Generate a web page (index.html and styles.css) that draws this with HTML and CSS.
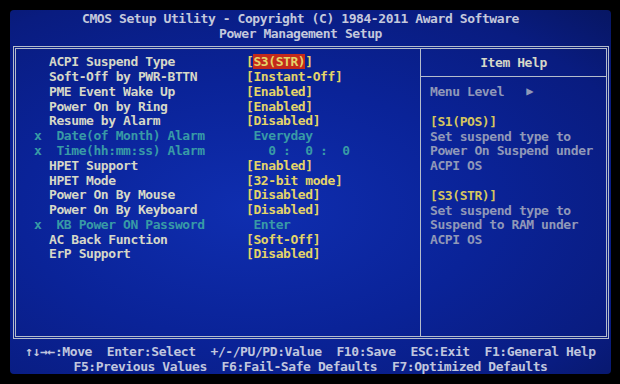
FILE: index.html
```html
<html lang="en">
<head>
  <meta charset="UTF-8">
  <meta name="viewport" content="width=device-width, initial-scale=1.0">
  <title>Power Management Setup</title>
  <link rel="stylesheet" href="styles.css">
</head>
<body>
  <div class="screen">
    <div class="title">
      <div>CMOS Setup Utility - Copyright (C) 1984-2011 Award Software</div>
      <div>Power Management Setup</div>
    </div>

    <div class="frame">
      <div class="items">
        <div class="row"><span class="mark"></span><span class="label">ACPI Suspend Type</span><span class="value">[<span class="selected">S3(STR)</span>]</span></div>
        <div class="row"><span class="mark"></span><span class="label">Soft-Off by PWR-BTTN</span><span class="value">[Instant-Off]</span></div>
        <div class="row"><span class="mark"></span><span class="label">PME Event Wake Up</span><span class="value">[Enabled]</span></div>
        <div class="row"><span class="mark"></span><span class="label">Power On by Ring</span><span class="value">[Enabled]</span></div>
        <div class="row"><span class="mark"></span><span class="label">Resume by Alarm</span><span class="value">[Disabled]</span></div>
        <div class="row off"><span class="mark">x</span><span class="label">&nbsp;Date(of Month) Alarm</span><span class="value">&nbsp;Everyday</span></div>
        <div class="row off"><span class="mark">x</span><span class="label">&nbsp;Time(hh:mm:ss) Alarm</span><span class="value">&nbsp;&nbsp;&nbsp;0 :&nbsp;&nbsp;0 :&nbsp;&nbsp;0</span></div>
        <div class="row"><span class="mark"></span><span class="label">HPET Support</span><span class="value">[Enabled]</span></div>
        <div class="row"><span class="mark"></span><span class="label">HPET Mode</span><span class="value">[32-bit mode]</span></div>
        <div class="row"><span class="mark"></span><span class="label">Power On By Mouse</span><span class="value">[Disabled]</span></div>
        <div class="row"><span class="mark"></span><span class="label">Power On By Keyboard</span><span class="value">[Disabled]</span></div>
        <div class="row off"><span class="mark">x</span><span class="label">&nbsp;KB Power ON Password</span><span class="value">&nbsp;Enter</span></div>
        <div class="row"><span class="mark"></span><span class="label">AC Back Function</span><span class="value">[Soft-Off]</span></div>
        <div class="row"><span class="mark"></span><span class="label">ErP Support</span><span class="value">[Disabled]</span></div>
      </div>

      <div class="help">
        <div class="help-title">Item Help</div>
        <div class="help-body">
          <div>Menu Level&nbsp;&nbsp;&nbsp;<span class="arrow">&#9654;</span></div>
          <div>&nbsp;</div>
          <div class="opt">[S1(POS)]</div>
          <div>Set suspend type to</div>
          <div>Power On Suspend under</div>
          <div>ACPI OS</div>
          <div>&nbsp;</div>
          <div class="opt">[S3(STR)]</div>
          <div>Set suspend type to</div>
          <div>Suspend to RAM under</div>
          <div>ACPI OS</div>
        </div>
      </div>
    </div>

    <div class="footer">
      <div>&#8593;&#8595;&#8594;&#8592;:Move&nbsp;&nbsp;Enter:Select&nbsp;&nbsp;+/-/PU/PD:Value&nbsp;&nbsp;F10:Save&nbsp;&nbsp;ESC:Exit&nbsp;&nbsp;F1:General Help</div>
      <div>F5:Previous Values&nbsp;&nbsp;F6:Fail-Safe Defaults&nbsp;&nbsp;F7:Optimized Defaults</div>
    </div>
  </div>
</body>
</html>
```

FILE: styles.css
```css
body {
  margin: 0;
  background: #000;
  font-family: "DejaVu Sans Mono", "Liberation Mono", monospace;
  font-weight: bold;
  font-size: 13px;
  letter-spacing: -0.42px;
  line-height: 14.8px;
}

.screen {
  margin: 10px 9px 10px 10px;
  height: 364px;
  display: flex;
  flex-direction: column;
  background: radial-gradient(ellipse at 40% 55%, #0f2eb0 0%, #0a2398 45%, #091c80 80%, #071663 100%);
  border-radius: 4px;
}

.title {
  height: 37px;
  padding-right: 20px;
  text-align: center;
  color: #c4c8dc;
  line-height: 15px;
  padding-top: 1px;
  box-sizing: border-box;
}

.frame {
  display: flex;
  margin: 0 2px 0 3px;
  height: 294px;
  border: 3px double #b4bccc;
}

.items {
  width: 386px;
  padding: 6px 0 0 18px;
}

.row {
  display: flex;
  white-space: pre;
  color: #d6d8c8;
}

.mark {
  width: 15px;
}

.label {
  width: 197px;
}

.value {
  color: #e4d468;
}

.selected {
  background: #c42a1c;
}

.row.off,
.row.off .value {
  color: #389aa6;
}

.help {
  flex: 1;
  border-left: 1px solid #b4bccc;
}

.help-title {
  height: 27px;
  line-height: 27px;
  text-align: center;
  color: #d6d8c8;
  border-bottom: 1px solid #b4bccc;
}

.help-body {
  padding: 7px 0 0 9px;
  color: #9098b8;
  white-space: nowrap;
}

.help-body .opt {
  color: #d6c65e;
}

.arrow {
  font-size: 12px;
  vertical-align: 1px;
  color: #9098b8;
}

.footer {
  flex: 1;
  padding-top: 5px;
  text-align: center;
  color: #c0c6de;
  line-height: 15px;
}
```
